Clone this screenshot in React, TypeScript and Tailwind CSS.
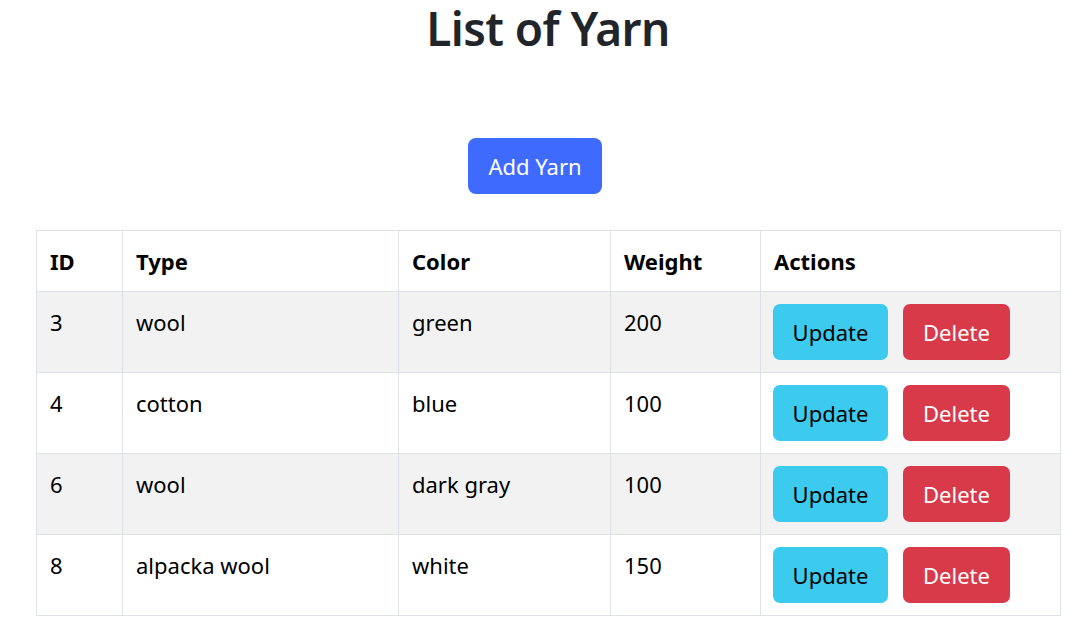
import React from "react";

const yarns = [
  { id: 3, type: "wool", color: "green", weight: 200 },
  { id: 4, type: "cotton", color: "blue", weight: 100 },
  { id: 6, type: "wool", color: "dark gray", weight: 100 },
  { id: 8, type: "alpacka wool", color: "white", weight: 150 },
];

export default function App() {
  return (
    <div
      className="min-h-screen bg-white text-[22px] leading-[33px] text-black"
      style={{ fontFamily: '"Noto Sans", "Open Sans", sans-serif' }}
    >
      <h1 className="pl-[10px] text-center text-[46px] leading-[56px] font-semibold tracking-[-0.6px] text-[#212529]">
        List of Yarn
      </h1>
      <div className="mt-[82px] flex justify-center pr-[16px]">
        <button className="h-[56px] w-[134px] rounded-[8px] bg-[#3f6afe] text-white">
          Add Yarn
        </button>
      </div>
      <table className="ml-[36px] mt-[36px] w-[1024px] table-fixed border-collapse">
        <colgroup>
          <col className="w-[86px]" />
          <col className="w-[276px]" />
          <col className="w-[212px]" />
          <col className="w-[150px]" />
          <col className="w-[300px]" />
        </colgroup>
        <thead>
          <tr>
            {["ID", "Type", "Color", "Weight", "Actions"].map((h) => (
              <th
                key={h}
                className="h-[61px] border border-[#dee2e6] px-[13px] py-0 text-left font-bold"
              >
                {h}
              </th>
            ))}
          </tr>
        </thead>
        <tbody>
          {yarns.map((y, i) => (
            <tr key={y.id} className={i % 2 === 0 ? "bg-[#f2f2f2]" : "bg-white"}>
              <td className="h-[81px] border border-[#dee2e6] px-[13px] pt-[14px] align-top">{y.id}</td>
              <td className="border border-[#dee2e6] px-[13px] pt-[14px] align-top">{y.type}</td>
              <td className="border border-[#dee2e6] px-[13px] pt-[14px] align-top">{y.color}</td>
              <td className="border border-[#dee2e6] px-[13px] pt-[14px] align-top">{y.weight}</td>
              <td className="border border-[#dee2e6] px-[12px] align-middle">
                <div className="flex gap-[15px]">
                  <button className="h-[56px] w-[115px] rounded-[7px] bg-[#3ccbef] text-black">
                    Update
                  </button>
                  <button className="h-[56px] w-[107px] rounded-[7px] bg-[#d83a4a] text-white">
                    Delete
                  </button>
                </div>
              </td>
            </tr>
          ))}
        </tbody>
      </table>
    </div>
  );
}
